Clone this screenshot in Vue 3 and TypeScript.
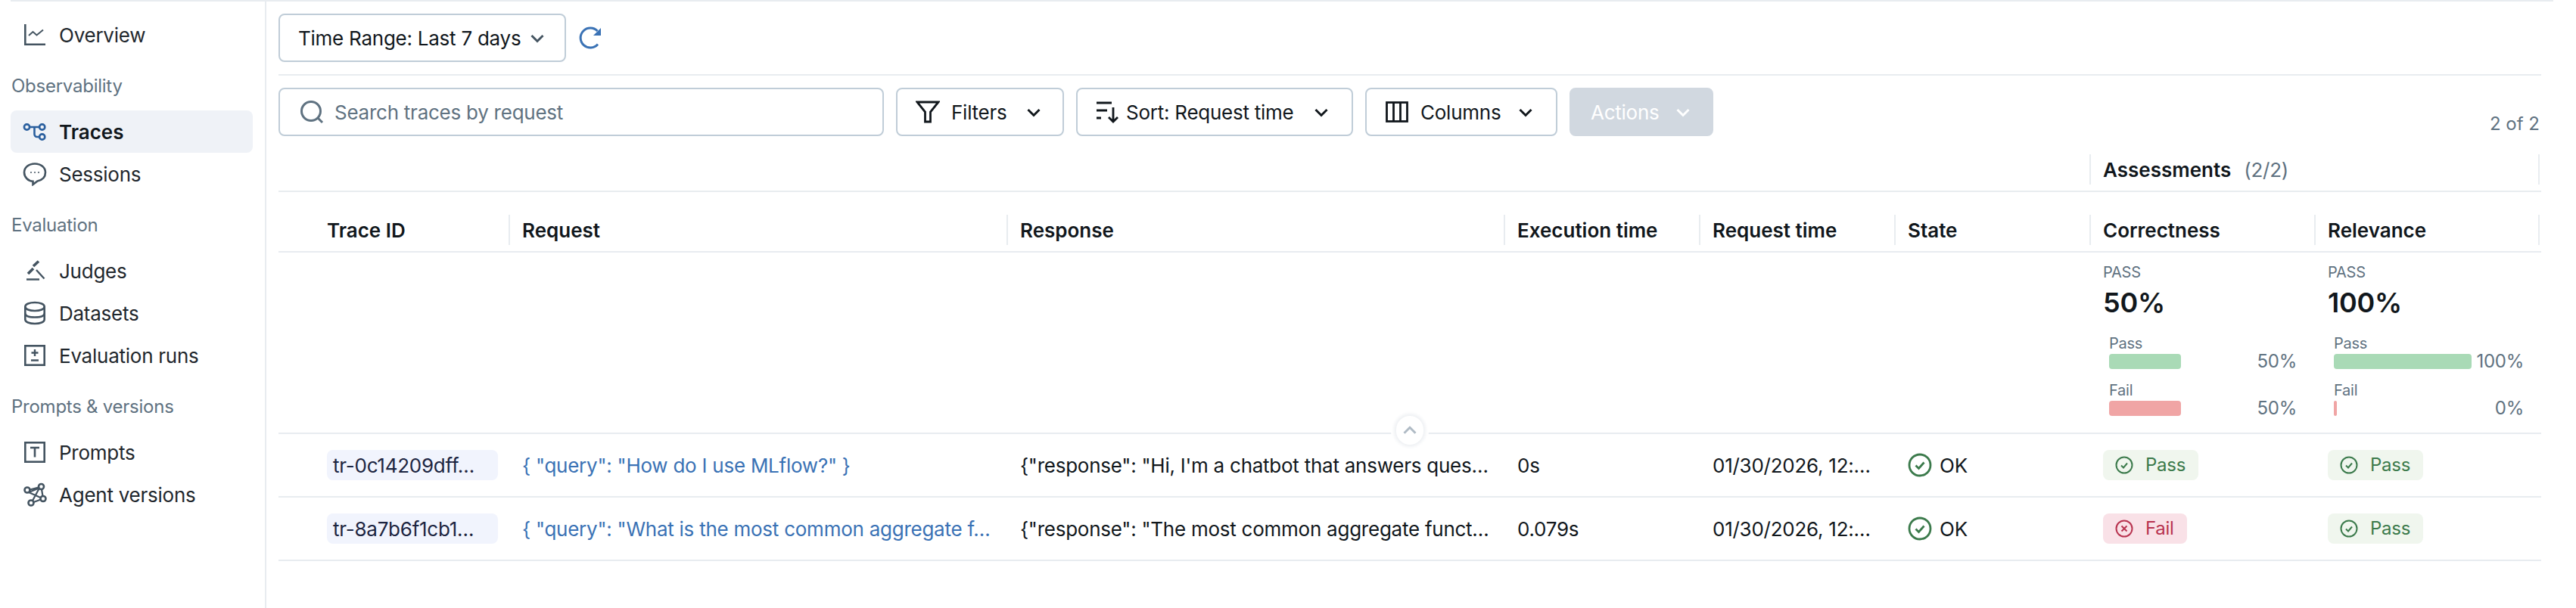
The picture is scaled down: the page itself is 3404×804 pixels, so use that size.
<script setup lang="ts">
interface NavItem {
  label: string
  icon: string
  active?: boolean
}
interface NavGroup {
  title?: string
  items: NavItem[]
}
interface Row {
  id: string
  request: string
  response: string
  time: string
  date: string
  correct: boolean
}
interface Stat {
  title: string
  pct: string
  pass: number
  fail: number
}

const groups: NavGroup[] = [
  { items: [{ label: 'Overview', icon: 'chart' }] },
  {
    title: 'Observability',
    items: [
      { label: 'Traces', icon: 'traces', active: true },
      { label: 'Sessions', icon: 'chat' }
    ]
  },
  {
    title: 'Evaluation',
    items: [
      { label: 'Judges', icon: 'gavel' },
      { label: 'Datasets', icon: 'db' },
      { label: 'Evaluation runs', icon: 'plusminus' }
    ]
  },
  {
    title: 'Prompts & versions',
    items: [
      { label: 'Prompts', icon: 'text' },
      { label: 'Agent versions', icon: 'graph' }
    ]
  }
]

const headers = ['Trace ID', 'Request', 'Response', 'Execution time', 'Request time', 'State', 'Correctness', 'Relevance']

const stats: Stat[] = [
  { title: 'Correctness', pct: '50%', pass: 50, fail: 50 },
  { title: 'Relevance', pct: '100%', pass: 100, fail: 0 }
]

const rows: Row[] = [
  {
    id: 'tr-0c14209dff…',
    request: '{ "query": "How do I use MLflow?" }',
    response: '{"response": "Hi, I\'m a chatbot that answers ques…',
    time: '0s',
    date: '01/30/2026, 12:…',
    correct: true
  },
  {
    id: 'tr-8a7b6f1cb1…',
    request: '{ "query": "What is the most common aggregate f…',
    response: '{"response": "The most common aggregate funct…',
    time: '0.079s',
    date: '01/30/2026, 12:…',
    correct: false
  }
]
</script>

<template>
  <div class="page">
    <div class="frame">
      <aside class="sidebar">
        <section v-for="(g, i) in groups" :key="i">
          <div v-if="g.title" class="group-title">{{ g.title }}</div>
          <div v-for="item in g.items" :key="item.label" class="nav-item" :class="{ active: item.active }">
            <svg class="nav-icon" viewBox="0 0 32 32" fill="none" stroke="currentColor" stroke-width="2.6">
              <template v-if="item.icon === 'chart'">
                <path d="M3.300 2v26.700H30" />
                <path d="M8 17l5.500-5 5 4.500 8.500-7" stroke-width="2" />
              </template>
              <template v-else-if="item.icon === 'traces'">
                <circle cx="5.500" cy="10" r="3.600" />
                <circle cx="25.700" cy="10" r="3.600" />
                <circle cx="25.700" cy="23" r="3.600" />
                <path d="M9 10h13M15.500 10v9.500a3.500 3.500 0 0 0 3.500 3.500h3" />
              </template>
              <template v-else-if="item.icon === 'chat'">
                <path d="M16 2.500C8 2.500 2 7.500 2 14s5.500 11.500 11.500 11.700L13.500 30l6-4.600C26 24 30 20 30 14 30 7.500 24 2.500 16 2.500z" />
                <path d="M10 14h2M15 14h2M20 14h2" stroke-width="1.600" />
              </template>
              <template v-else-if="item.icon === 'gavel'">
                <path d="M7 20l7-7M14 10l7-6.500" stroke-width="3.600" />
                <path d="M18 15l10.500 11.500M5 27.500h17" stroke-width="2.400" />
              </template>
              <template v-else-if="item.icon === 'db'">
                <path d="M3.300 7.500C3.300 4 9 2 16 2s12.700 2 12.700 5.500v17C28.700 28 23 30 16 30S3.300 28 3.300 24.500z" />
                <path d="M3.300 7.500C3.300 11 9 13 16 13s12.700-2 12.700-5.500M3.300 16.500C3.300 20 9 21.500 16 21.500s12.700-1.500 12.700-5" />
              </template>
              <template v-else-if="item.icon === 'plusminus'">
                <rect x="3.300" y="3.300" width="25.400" height="25.400" />
                <path d="M16 8v9M11.500 12.500h9M11 22.500h10" stroke-width="2.400" />
              </template>
              <template v-else-if="item.icon === 'text'">
                <rect x="3.300" y="3.300" width="25.400" height="25.400" />
                <path d="M10 10h12M16 10v12.500" />
              </template>
              <template v-else>
                <circle cx="6" cy="10" r="3.500" />
                <circle cx="24.500" cy="5.500" r="3.500" />
                <circle cx="27" cy="21.500" r="3.500" />
                <circle cx="11" cy="27" r="3.500" />
                <path d="M9.500 9.500l11.500-3M8 13l15.500 7M21.500 7.500L8 13M22 7.500L13 24M25 9l1.500 9M14.500 26l9.500-3.500" stroke-width="2.200" />
              </template>
            </svg>
            <span class="label">{{ item.label }}</span>
          </div>
        </section>
      </aside>

      <main class="main">
        <div class="time-bar">
          <button class="btn time-btn">
            <span class="label">Time Range: Last 7 days</span>
            <svg class="chev-sm" viewBox="0 0 16 16" fill="none" stroke="currentColor" stroke-width="2"><path d="M3 6l5 5 5-5" /></svg>
          </button>
          <svg class="refresh" viewBox="0 0 32 32" fill="none" stroke="#3a72b5" stroke-width="3">
            <path d="M25.500 7A13 13 0 1 0 26 24.500" />
            <path d="M30 3v10H20z" stroke="none" fill="#3a72b5" />
          </svg>
        </div>

        <div class="filter-bar">
          <div class="search">
            <svg class="search-icon" viewBox="0 0 32 32" fill="none" stroke="#5f7281" stroke-width="3">
              <circle cx="15" cy="15" r="12.500" />
              <path d="M24 24l6 6" />
            </svg>
            <span class="label">Search traces by request</span>
          </div>
          <button class="btn filters-btn">
            <svg class="btn-icon" viewBox="0 0 32 32" fill="none" stroke="#11171c" stroke-width="2.800"><path d="M2 3h28L19.500 16v13h-7V16z" /></svg>
            <span class="label">Filters</span>
            <svg class="chev" viewBox="0 0 16 16" fill="none" stroke="currentColor" stroke-width="2"><path d="M3 6l5 5 5-5" /></svg>
          </button>
          <button class="btn sort-btn">
            <svg class="btn-icon" viewBox="0 0 32 32" fill="none" stroke="#11171c" stroke-width="2.800"><path d="M1 4h20M1 14h14M1 24h6M23 10v19M17 23l6 6 6-6" /></svg>
            <span class="label">Sort: Request time</span>
            <svg class="chev" viewBox="0 0 16 16" fill="none" stroke="currentColor" stroke-width="2"><path d="M3 6l5 5 5-5" /></svg>
          </button>
          <button class="btn columns-btn">
            <svg class="btn-icon" viewBox="0 0 32 32" fill="none" stroke="#11171c" stroke-width="2.800"><rect x="2.500" y="3.500" width="27" height="25" /><path d="M11.500 3.500v25M20.500 3.500v25" /></svg>
            <span class="label">Columns</span>
            <svg class="chev" viewBox="0 0 16 16" fill="none" stroke="currentColor" stroke-width="2"><path d="M3 6l5 5 5-5" /></svg>
          </button>
          <button class="btn actions-btn">
            <span class="label">Actions</span>
            <svg class="chev" viewBox="0 0 16 16" fill="none" stroke="currentColor" stroke-width="2"><path d="M3 6l5 5 5-5" /></svg>
          </button>
          <span class="count">2 of 2</span>
        </div>

        <div class="table">
          <div class="group-row">
            <div class="group-cell">
              <strong class="label">Assessments</strong>
              <span class="muted label">(2/2)</span>
            </div>
          </div>

          <div class="grid head-row">
            <div v-for="(h, i) in headers" :key="h" class="th" :class="{ first: i === 0 }">{{ h }}</div>
          </div>

          <div class="grid summary-row">
            <div class="summary-spacer"></div>
            <div v-for="s in stats" :key="s.title" class="summary">
              <div class="sum-label">PASS</div>
              <div class="sum-pct">{{ s.pct }}</div>
              <div class="bars">
                <div class="bar-block">
                  <div class="bar-label">Pass</div>
                  <div class="bar-line">
                    <div class="track"><div class="fill pass" :style="{ width: s.pass + '%' }"></div></div>
                    <span class="bar-val">{{ s.pass }}%</span>
                  </div>
                </div>
                <div class="bar-block">
                  <div class="bar-label">Fail</div>
                  <div class="bar-line">
                    <div class="track"><div class="fill fail" :style="{ width: s.fail + '%' }"></div></div>
                    <span class="bar-val">{{ s.fail }}%</span>
                  </div>
                </div>
              </div>
            </div>
            <button class="collapse" aria-label="Collapse">
              <svg viewBox="0 0 16 16" fill="none" stroke="currentColor" stroke-width="2"><path d="M3 10.500l5-5 5 5" /></svg>
            </button>
          </div>

          <div v-for="r in rows" :key="r.id" class="grid data-row">
            <div class="td first"><span class="trace-id">{{ r.id }}</span></div>
            <div class="td link"><span class="label">{{ r.request }}</span></div>
            <div class="td"><span class="label">{{ r.response }}</span></div>
            <div class="td"><span class="label">{{ r.time }}</span></div>
            <div class="td"><span class="label">{{ r.date }}</span></div>
            <div class="td state">
              <svg viewBox="0 0 32 32" fill="none" stroke="#3b7a4b" stroke-width="2.800">
                <circle cx="16" cy="16" r="14" />
                <path d="M10.500 16.500l4 4 7-8" />
              </svg>
              <span class="label">OK</span>
            </div>
            <div class="td">
              <span class="tag" :class="r.correct ? 'tag-pass' : 'tag-fail'">
                <svg viewBox="0 0 24 24" fill="none" stroke="currentColor" stroke-width="2">
                  <circle cx="12" cy="12" r="10.500" />
                  <path v-if="r.correct" d="M8 12.500l3 3 5-6" />
                  <path v-else d="M8.500 8.500l7 7M15.500 8.500l-7 7" />
                </svg>
                <span>{{ r.correct ? 'Pass' : 'Fail' }}</span>
              </span>
            </div>
            <div class="td">
              <span class="tag tag-pass">
                <svg viewBox="0 0 24 24" fill="none" stroke="currentColor" stroke-width="2">
                  <circle cx="12" cy="12" r="10.500" />
                  <path d="M8 12.500l3 3 5-6" />
                </svg>
                <span>Pass</span>
              </span>
            </div>
          </div>
        </div>
      </main>
    </div>
  </div>
</template>

<style>
html,
body {
  margin: 0;
  background: #fff;
  overflow: hidden;
}
</style>

<style scoped>
.page {
  width: 3404px;
  height: 804px;
  padding: 0 30px 0 14px;
  box-sizing: border-box;
  font-family: Inter, "Liberation Sans", sans-serif;
  font-size: 26px;
  line-height: 40px;
  letter-spacing: -0.25px;
  color: #11171c;
}
.label {
  padding-top: 2px;
}
.frame {
  display: flex;
  height: 100%;
  box-sizing: border-box;
  border-top: 2px solid #e8ecf0;
}
.sidebar {
  width: 338px;
  flex: none;
  box-sizing: border-box;
  padding-top: 16px;
  border-right: 2px solid #e8ecf0;
}
.group-title {
  padding: 24px 0 16px 1px;
  font-size: 24px;
  line-height: 32px;
  color: #5f7281;
}
.nav-item {
  display: flex;
  align-items: center;
  gap: 16px;
  height: 56px;
  width: 320px;
  box-sizing: border-box;
  padding-left: 16px;
  border-radius: 8px;
  color: #1f272d;
}
.nav-icon {
  width: 32px;
  height: 32px;
  flex: none;
  color: #445461;
}
.nav-item.active {
  background: #eff2f7;
  color: #11171c;
  font-weight: 600;
  letter-spacing: 0;
}
.nav-item.active .nav-icon {
  color: #2a5f9e;
}
.main {
  flex: 1;
  min-width: 0;
  padding-left: 16px;
}
.time-bar {
  display: flex;
  align-items: center;
  gap: 16px;
  width: 2990px;
  height: 98px;
  box-sizing: border-box;
  border-bottom: 2px solid #e8ecf0;
}
.btn {
  display: flex;
  align-items: center;
  height: 64px;
  box-sizing: border-box;
  padding: 0 24px;
  border: 2px solid #c0cdd8;
  border-radius: 8px;
  background: #fff;
  font: inherit;
  letter-spacing: inherit;
  white-space: nowrap;
  color: #11171c;
}
.time-btn {
  width: 380px;
  justify-content: space-between;
}
.chev-sm {
  width: 24px;
  height: 24px;
  flex: none;
  color: #445461;
}
.chev {
  width: 24px;
  height: 24px;
  flex: none;
  margin: 0 2px 0 auto;
}
.refresh {
  width: 32px;
  height: 32px;
}
.filter-bar {
  display: flex;
  align-items: flex-end;
  gap: 16px;
  width: 2988px;
  padding-top: 16px;
}
.search {
  display: flex;
  align-items: center;
  gap: 14px;
  width: 800px;
  height: 64px;
  box-sizing: border-box;
  padding-left: 26px;
  border: 2px solid #c0cdd8;
  border-radius: 8px;
  color: #5f7281;
}
.search-icon {
  width: 32px;
  height: 32px;
}
.btn-icon {
  width: 32px;
  height: 32px;
  flex: none;
}
.filters-btn {
  width: 222px;
  gap: 15px;
}
.sort-btn {
  width: 366px;
  gap: 8px;
  padding-right: 26px;
}
.columns-btn {
  width: 254px;
  gap: 15px;
  padding-right: 26px;
}
.actions-btn {
  width: 190px;
  padding-left: 26px;
  border-color: #d1d8e0;
  background: #d1d8e0;
  color: #fff;
}
.count {
  margin-left: auto;
  font-size: 24px;
  line-height: 32px;
  letter-spacing: 0;
  color: #5f7281;
}
.table {
  width: 2990px;
  margin-top: 16px;
}
.group-row {
  display: flex;
  justify-content: flex-end;
  height: 56px;
  border-bottom: 2px solid #e8ecf0;
  padding-right: 2px;
}
.group-cell {
  width: 595px;
  height: 40px;
  margin-top: 8px;
  box-sizing: border-box;
  padding-left: 16px;
  display: flex;
  gap: 17px;
  align-items: center;
  border-left: 2px solid #e8ecf0;
  border-right: 2px solid #e8ecf0;
}
.group-cell strong {
  font-weight: 600;
  letter-spacing: 0;
}
.muted {
  color: #5f7281;
  font-size: 26px;
}
.grid {
  display: grid;
  grid-template-columns: 304px 658px 657px 258px 258px 258px 297px 300px;
}
.head-row {
  height: 80px;
  box-sizing: border-box;
  padding-top: 30px;
  border-bottom: 2px solid #e8ecf0;
}
.th {
  height: 40px;
  box-sizing: border-box;
  padding-left: 16px;
  border-left: 2px solid #e8ecf0;
  font-weight: 600;
  line-height: 42px;
  letter-spacing: 0;
}
.th:last-child {
  border-right: 2px solid #e8ecf0;
  width: 298px;
}
.th.first {
  border-left: none;
  padding-left: 64px;
}
.summary-row {
  position: relative;
  height: 240px;
  box-sizing: border-box;
  border-bottom: 2px solid #e8ecf0;
}
.summary-spacer {
  grid-column: 1 / 7;
}
.summary {
  padding: 16px 23px 0 18px;
}
.sum-label {
  font-size: 20px;
  line-height: 20px;
  color: #5f7281;
}
.sum-pct {
  margin-top: 8px;
  font-size: 36px;
  line-height: 44px;
  font-weight: 600;
}
.bars {
  margin-top: 20px;
  padding-left: 8px;
}
.bar-block {
  margin-bottom: 14px;
}
.bar-label {
  font-size: 20px;
  line-height: 24px;
  color: #5f7281;
}
.bar-line {
  display: flex;
  align-items: center;
  gap: 6px;
  height: 24px;
}
.track {
  flex: 1;
  height: 20px;
}
.fill {
  height: 100%;
  min-width: 4px;
  border-radius: 4px;
}
.fill.pass {
  background: #a9dab6;
}
.fill.fail {
  background: #f0a5a5;
}
.bar-val {
  font-size: 24px;
  line-height: 24px;
  color: #5f7281;
}
.collapse {
  position: absolute;
  left: 1477px;
  bottom: -16px;
  display: flex;
  align-items: center;
  justify-content: center;
  width: 36px;
  height: 38px;
  padding: 0;
  border: none;
  border-radius: 18px;
  background: #fff;
  color: #b0bbc5;
  box-shadow: 0 0 4px 3px #eff1f4, 0 0 0 7px #fff;
}
.collapse svg {
  display: block;
  width: 24px;
  height: 24px;
}
.data-row {
  height: 84px;
  box-sizing: border-box;
  border-bottom: 2px solid #e8ecf0;
}
.td {
  display: flex;
  align-items: center;
  padding-left: 18px;
  white-space: nowrap;
  overflow: hidden;
}
.td.first {
  padding-left: 64px;
}
.trace-id {
  display: block;
  width: 226px;
  height: 40px;
  box-sizing: border-box;
  padding-left: 8px;
  border-radius: 8px;
  background: #f1f4fd;
  line-height: 42px;
  color: #1c2541;
}
.link {
  color: #3a72b5;
}
.state {
  gap: 10px;
}
.state svg {
  width: 32px;
  height: 32px;
}
.tag {
  display: inline-flex;
  align-items: center;
  gap: 16px;
  height: 40px;
  padding: 0 17px 0 16px;
  border-radius: 8px;
  font-size: 24px;
}
.tag svg {
  width: 24px;
  height: 24px;
}
.tag-pass {
  background: #f0f6ee;
  color: #3b7a4b;
}
.tag-fail {
  background: #f9e1e7;
  color: #b8334f;
}
</style>
